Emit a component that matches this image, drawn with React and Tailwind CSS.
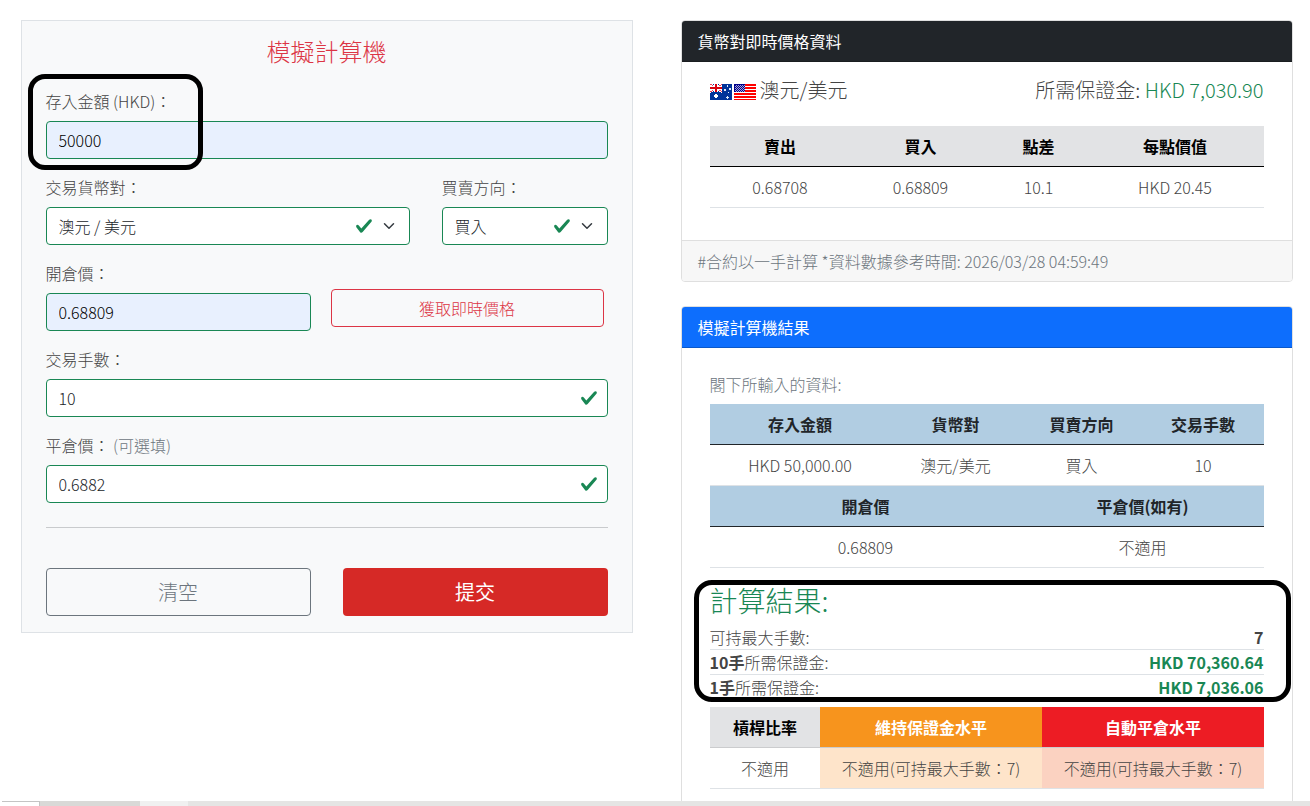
import React, { useState } from "react";

const CHECK = "M2.3 6.73.6 4.53c-.4-1.04.46-1.4 1.1-.8l1.1 1.4 3.4-3.8c.6-.63 1.6-.27 1.2.7l-4 4.6c-.43.5-.8.4-1.1.1z";

function ValidIcon() {
  return (
    <svg viewBox="0 0 8 8" className="w-[18px] h-[18px] shrink-0">
      <path fill="#198754" d={CHECK} />
    </svg>
  );
}

function Chevron() {
  return (
    <svg viewBox="0 0 16 16" className="w-4 h-3 ml-2 mr-3 shrink-0">
      <path d="m2 5 6 6 6-6" fill="none" stroke="#343a40" strokeWidth="2" strokeLinecap="round" strokeLinejoin="round" />
    </svg>
  );
}

function FlagAU() {
  return (
    <svg viewBox="0 0 22 16" className="w-[22px] h-4" shapeRendering="crispEdges">
      <rect width="22" height="16" fill="#003399" />
      <path d="M0 0 12 8M12 0 0 8" stroke="#fff" strokeWidth="2.4" />
      <path d="M0 0 12 8M12 0 0 8" stroke="#e8112d" strokeWidth="0.8" />
      <path d="M6 0v8M0 4h12" stroke="#fff" strokeWidth="4" />
      <path d="M6 0v8M0 4h12" stroke="#d8000f" strokeWidth="2" />
      <path d="M5 10h2v1h1v2h-1v1h-2v-1h-1v-2h1z" fill="#fff" />
      <path d="M17 1h1v2h-1zM14 5h2v2h-2zM19 4h2v2h-2zM18 8h1v1h-1zM17 12h1v1h1v1h-1v1h-1v-1h-1v-1h1z" fill="#dfe8fa" />
    </svg>
  );
}

function FlagUS() {
  const dots = [];
  for (let y = 1; y < 8; y++) {
    for (let x = 1 + (y % 2); x < 11; x += 2) dots.push([x, y]);
  }
  return (
    <svg viewBox="0 0 22 16" className="w-[22px] h-4" shapeRendering="crispEdges">
      <rect width="22" height="16" fill="#fff" />
      {[0, 3, 6, 9, 12].map((y) => <rect key={y} y={y} width="22" height="2" fill="#f00" />)}
      <rect y="15" width="22" height="1" fill="#f00" />
      <rect width="11" height="8" fill="#00008b" />
      {dots.map(([x, y]) => <rect key={`${x}-${y}`} x={x} y={y} width="1" height="1" fill="#a5a5d8" />)}
    </svg>
  );
}

function Label({ children }) {
  return <label className="block h-6 leading-6 mb-2">{children}</label>;
}

function Field({ value, onChange, autofill }) {
  return (
    <div className={`flex items-center h-[38px] border border-[#198754] rounded pr-[9px] ${autofill ? "bg-[#e8f0fe] text-black" : "bg-white text-[#212529]"}`}>
      <input value={value} onChange={(e) => onChange(e.target.value)} className="flex-1 min-w-0 h-6 px-3 bg-transparent outline-none" />
      {!autofill && <ValidIcon />}
    </div>
  );
}

function SelectBox({ value }) {
  return (
    <button type="button" className="flex items-center w-full h-[38px] border border-[#198754] rounded bg-white text-[#212529]">
      <span className="flex-1 text-left pl-3">{value}</span>
      <ValidIcon />
      <Chevron />
    </button>
  );
}

function Card({ title, headClass, children }) {
  return (
    <section className="border border-[#dfdfdf] rounded bg-white">
      <h2 className={`h-[41px] leading-6 py-2 px-4 rounded-t-[3px] border-b border-black/20 text-white font-normal ${headClass}`}>{title}</h2>
      {children}
    </section>
  );
}

const cell = "h-[41px] py-0 pr-0 pl-px text-center border-b";

export default function App() {
  const [deposit, setDeposit] = useState("50000");
  const [openPrice, setOpenPrice] = useState("0.68809");
  const [lots, setLots] = useState("10");
  const [closePrice, setClosePrice] = useState("0.6882");

  const summary = [
    { bold: "", label: "可持最大手數:", value: "7", color: "text-[#444]" },
    { bold: "10手", label: "所需保證金:", value: "HKD 70,360.64", color: "text-[#198754]" },
    { bold: "1手", label: "所需保證金:", value: "HKD 7,036.06", color: "text-[#198754]" },
  ];

  return (
    <div className="relative w-[1310px] h-[806px] overflow-hidden bg-white text-base leading-6 font-light text-[#444] font-['Noto_Sans_CJK_TC',sans-serif]">
      <main className="flex items-start gap-12 h-[801px] overflow-hidden pt-5 pl-[20.5px]">
        <form className="w-[612px] h-[613px] shrink-0 border border-[#dee2e6] bg-[#f8f9fa] px-6 pt-4" onSubmit={(e) => e.preventDefault()}>
          <h1 className="text-2xl leading-7 mb-6 text-center font-light text-[#dc3545]">模擬計算機</h1>
          <div className="mb-4">
            <Label>存入金額 (HKD)：</Label>
            <Field value={deposit} onChange={setDeposit} autofill />
          </div>
          <div className="flex gap-8 mb-4">
            <div className="w-[364px]">
              <Label>交易貨幣對：</Label>
              <SelectBox value="澳元 / 美元" />
            </div>
            <div className="flex-1">
              <Label>買賣方向：</Label>
              <SelectBox value="買入" />
            </div>
          </div>
          <div className="flex gap-5 mb-4">
            <div className="w-[265px]">
              <Label>開倉價：</Label>
              <Field value={openPrice} onChange={setOpenPrice} autofill />
            </div>
            <button type="button" className="w-[273px] h-[38px] mt-7 border border-[#dc3545] rounded text-[#dc3545]">獲取即時價格</button>
          </div>
          <div className="mb-4">
            <Label>交易手數：</Label>
            <Field value={lots} onChange={setLots} />
          </div>
          <div>
            <Label>平倉價： <span className="text-[#6c757d]">(可選填)</span></Label>
            <Field value={closePrice} onChange={setClosePrice} />
          </div>
          <hr className="mt-6 mb-10 border-t border-[#c9cbcd]" />
          <div className="flex justify-between">
            <button type="reset" className="w-[265px] h-12 border border-[#6c757d] rounded text-xl text-[#6c757d]">清空</button>
            <button type="submit" className="w-[265px] h-12 rounded bg-[#d62926] text-xl font-normal text-white">提交</button>
          </div>
        </form>

        <div className="w-[612px] shrink-0 flex flex-col gap-6">
          <Card title="貨幣對即時價格資料" headClass="bg-[#212529]">
            <div className="px-7 pt-4 h-[178px]">
              <div className="flex justify-between text-xl leading-6 mb-6">
                <div className="flex items-center">
                  <span className="flex gap-0.5 mr-1 mt-1"><FlagAU /><FlagUS /></span>
                  澳元/美元
                </div>
                <div>所需保證金: <span className="text-[#198754]">HKD 7,030.90</span></div>
              </div>
              <table className="w-full table-fixed border-separate border-spacing-0">
                <colgroup><col className="w-[140px]" /><col className="w-[141px]" /><col className="w-[95px]" /><col className="w-[178px]" /></colgroup>
                <thead>
                  <tr className="bg-[#e2e3e5] text-black">
                    {["賣出", "買入", "點差", "每點價值"].map((t) => <th key={t} className={`${cell} border-black font-bold`}>{t}</th>)}
                  </tr>
                </thead>
                <tbody>
                  <tr>
                    {["0.68708", "0.68809", "10.1", "HKD 20.45"].map((t) => <td key={t} className={`${cell} border-[#dee2e6]`}>{t}</td>)}
                  </tr>
                </tbody>
              </table>
            </div>
            <div className="h-[41px] border-t border-[#dfdfdf] rounded-b-[3px] bg-[#f7f7f7] px-4 py-2 text-[#6c757d]">#合約以一手計算 *資料數據參考時間: 2026/03/28 04:59:49</div>
          </Card>

          <Card title="模擬計算機結果" headClass="bg-[#0d6efd]">
            <div className="px-7 pt-6 h-[520px]">
              <p className="h-6 mb-2 text-[#6c757d]">閣下所輸入的資料:</p>
              <table className="w-full table-fixed border-separate border-spacing-0">
                <colgroup><col className="w-[180px]" /><col className="w-[131px]" /><col className="w-[121px]" /><col className="w-[122px]" /></colgroup>
                <tbody>
                  <tr className="bg-[#b1cde2] text-[#212529]">
                    {["存入金額", "貨幣對", "買賣方向", "交易手數"].map((t) => <th key={t} className={`${cell} border-[#212529] font-bold`}>{t}</th>)}
                  </tr>
                  <tr>
                    {["HKD 50,000.00", "澳元/美元", "買入", "10"].map((t) => <td key={t} className={`${cell} border-[#dee2e6]`}>{t}</td>)}
                  </tr>
                  <tr className="bg-[#b1cde2] text-[#212529]">
                    {["開倉價", "平倉價(如有)"].map((t) => <th key={t} colSpan={2} className={`${cell} border-[#212529] font-bold`}>{t}</th>)}
                  </tr>
                  <tr>
                    {["0.68809", "不適用"].map((t) => <td key={t} colSpan={2} className={`${cell} border-[#dee2e6]`}>{t}</td>)}
                  </tr>
                </tbody>
              </table>

              <h3 className="mt-4 mb-2 text-[28px] leading-[33px] font-light text-[#198754]">計算結果:</h3>
              <div className="mb-[7px]">
                {summary.map((row) => (
                  <div key={row.value} className="flex justify-between h-[25px] border-b border-[#dee2e6]">
                    <span><b className="font-bold">{row.bold}</b>{row.label}</span>
                    <span className={`font-bold ${row.color}`}>{row.value}</span>
                  </div>
                ))}
              </div>

              <table className="w-full table-fixed border-separate border-spacing-0">
                <colgroup><col className="w-[110px]" /><col className="w-[222px]" /><col className="w-[222px]" /></colgroup>
                <tbody>
                  <tr>
                    <th className={`${cell} border-[#cbccce] bg-[#e2e3e5] text-black font-bold`}>槓桿比率</th>
                    <th className={`${cell} border-[#cbccce] bg-[#f7941d] text-white font-bold`}>維持保證金水平</th>
                    <th className={`${cell} border-[#cbccce] bg-[#ed1c24] text-white font-bold`}>自動平倉水平</th>
                  </tr>
                  <tr>
                    <td className={`${cell} border-[#dee2e6]`}>不適用</td>
                    <td className={`${cell} border-[#dee2e6] bg-[#fee4ca]`}>不適用(可持最大手數：7)</td>
                    <td className={`${cell} border-[#dee2e6] bg-[#fbd2c1]`}>不適用(可持最大手數：7)</td>
                  </tr>
                </tbody>
              </table>
            </div>
          </Card>
        </div>
      </main>

      {/* page footer edge */}
      <div className="flex h-[5px] pl-0.5">
        <div className="w-[38px] border-t border-r border-[#c4c4c4] bg-white" />
        <div className="w-[100px] bg-[#d9d9d7]" />
        <div className="w-12 bg-[#f0f0f0]" />
        <div className="flex-1 bg-[#e5e5e4]" />
      </div>

      {/* marker frames over the key figures */}
      <div className="absolute left-[28px] top-[74px] w-[175px] h-[96px] border-[5px] border-black rounded-[17px] pointer-events-none" />
      <div className="absolute left-[694px] top-[580px] w-[597px] h-[122px] border-[5px] border-black rounded-[18px] pointer-events-none" />
    </div>
  );
}
